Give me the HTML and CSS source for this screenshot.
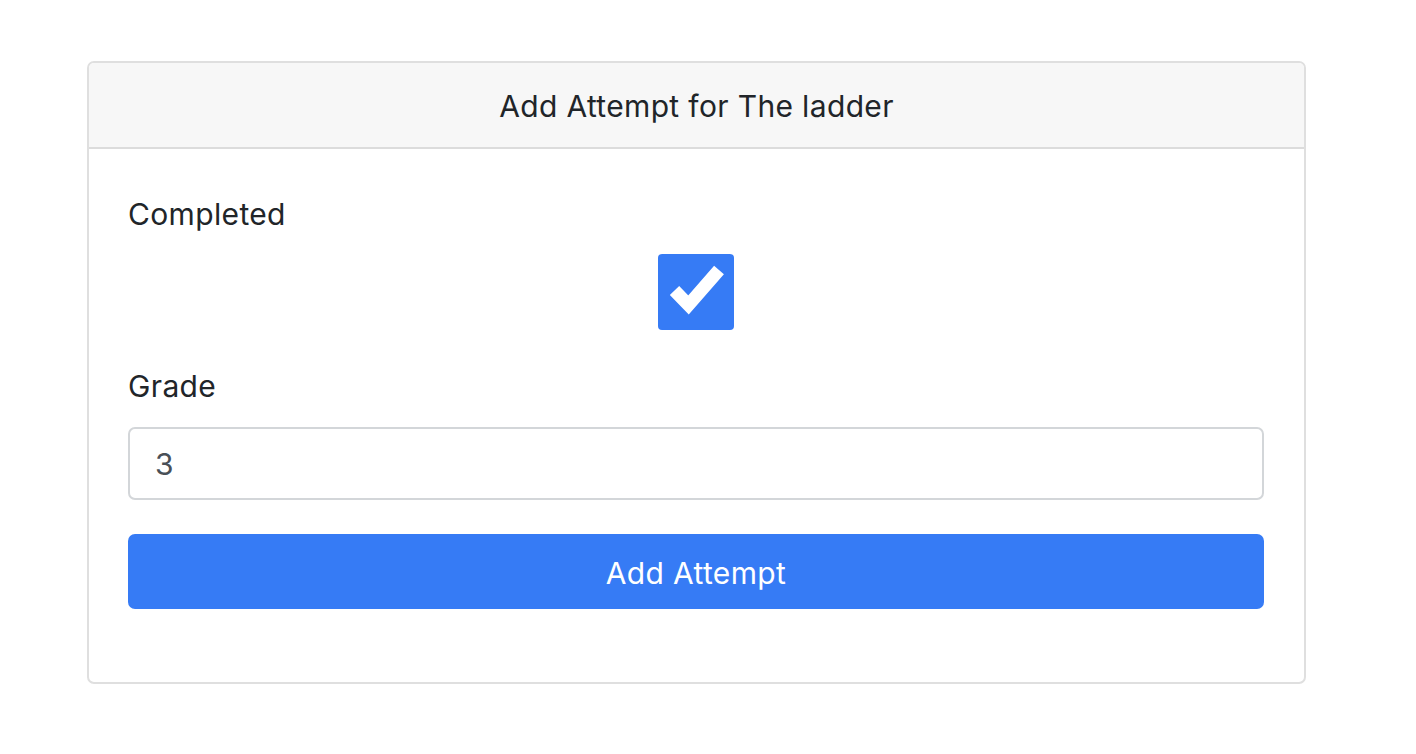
FILE: index.html
```html
<!DOCTYPE html>
<html>
<head>
<meta charset="utf-8">
<link rel="stylesheet" href="styles.css">
</head>
<body>
<div class="page">
  <div class="card">
    <div class="card-header">Add Attempt for The ladder</div>
    <div class="card-body">
      <label class="label">Completed</label>
      <div class="check-row">
        <span class="checkbox">
          <svg width="76" height="76" viewBox="0 0 76 76">
            <polyline points="16.5,36.5 30.5,51 61,16" fill="none" stroke="#fff" stroke-width="13" stroke-linejoin="miter" stroke-linecap="butt"/>
          </svg>
        </span>
      </div>
      <label class="label grade">Grade</label>
      <div class="input">3</div>
      <button class="btn">Add Attempt</button>
    </div>
  </div>
</div>
</body>
</html>
```

FILE: styles.css
```css
html, body {
  margin: 0;
  padding: 0;
  background: #fff;
}
body {
  font-family: Inter, "Liberation Sans", Arial, sans-serif;
  color: #212529;
  letter-spacing: 0.35px;
}
.page {
  padding: 61px 110px 0 87px;
}
.card {
  width: 1219px;
  box-sizing: border-box;
  border: 2px solid #dfdfdf;
  border-radius: 7px;
  overflow: hidden;
}
.card-header {
  background: #f7f7f7;
  border-bottom: 2px solid #dcdcdc;
  display: flex;
  align-items: center;
  justify-content: center;
  font-size: 30px;
  line-height: 42px;
  padding-top: 2px;
  box-sizing: border-box;
  height: 86px;
}
.card-body {
  padding: 44px 40px 73px 39px;
  display: flex;
  flex-direction: column;
}
.label {
  font-size: 30px;
  line-height: 42px;
  display: block;
}
.check-row {
  display: flex;
  justify-content: center;
  margin-top: 19px;
}
.checkbox {
  width: 76px;
  height: 76px;
  border-radius: 4px;
  background: #367bf5;
  display: block;
}
.checkbox svg {
  display: block;
}
.grade {
  margin-top: 35px;
}
.input {
  margin-top: 20px;
  height: 73px;
  box-sizing: border-box;
  border: 2px solid #d3d6d9;
  border-radius: 7px;
  padding: 2px 0 0 25px;
  font-size: 30px;
  line-height: 67px;
  color: #495057;
}
.btn {
  margin-top: 34px;
  height: 75px;
  border: none;
  border-radius: 7px;
  background: #367bf5;
  color: #fff;
  font-family: Inter, "Liberation Sans", Arial, sans-serif;
  letter-spacing: 0.35px;
  font-size: 30px;
  padding: 2px 0 0 0;
  width: 100%;
}
```
